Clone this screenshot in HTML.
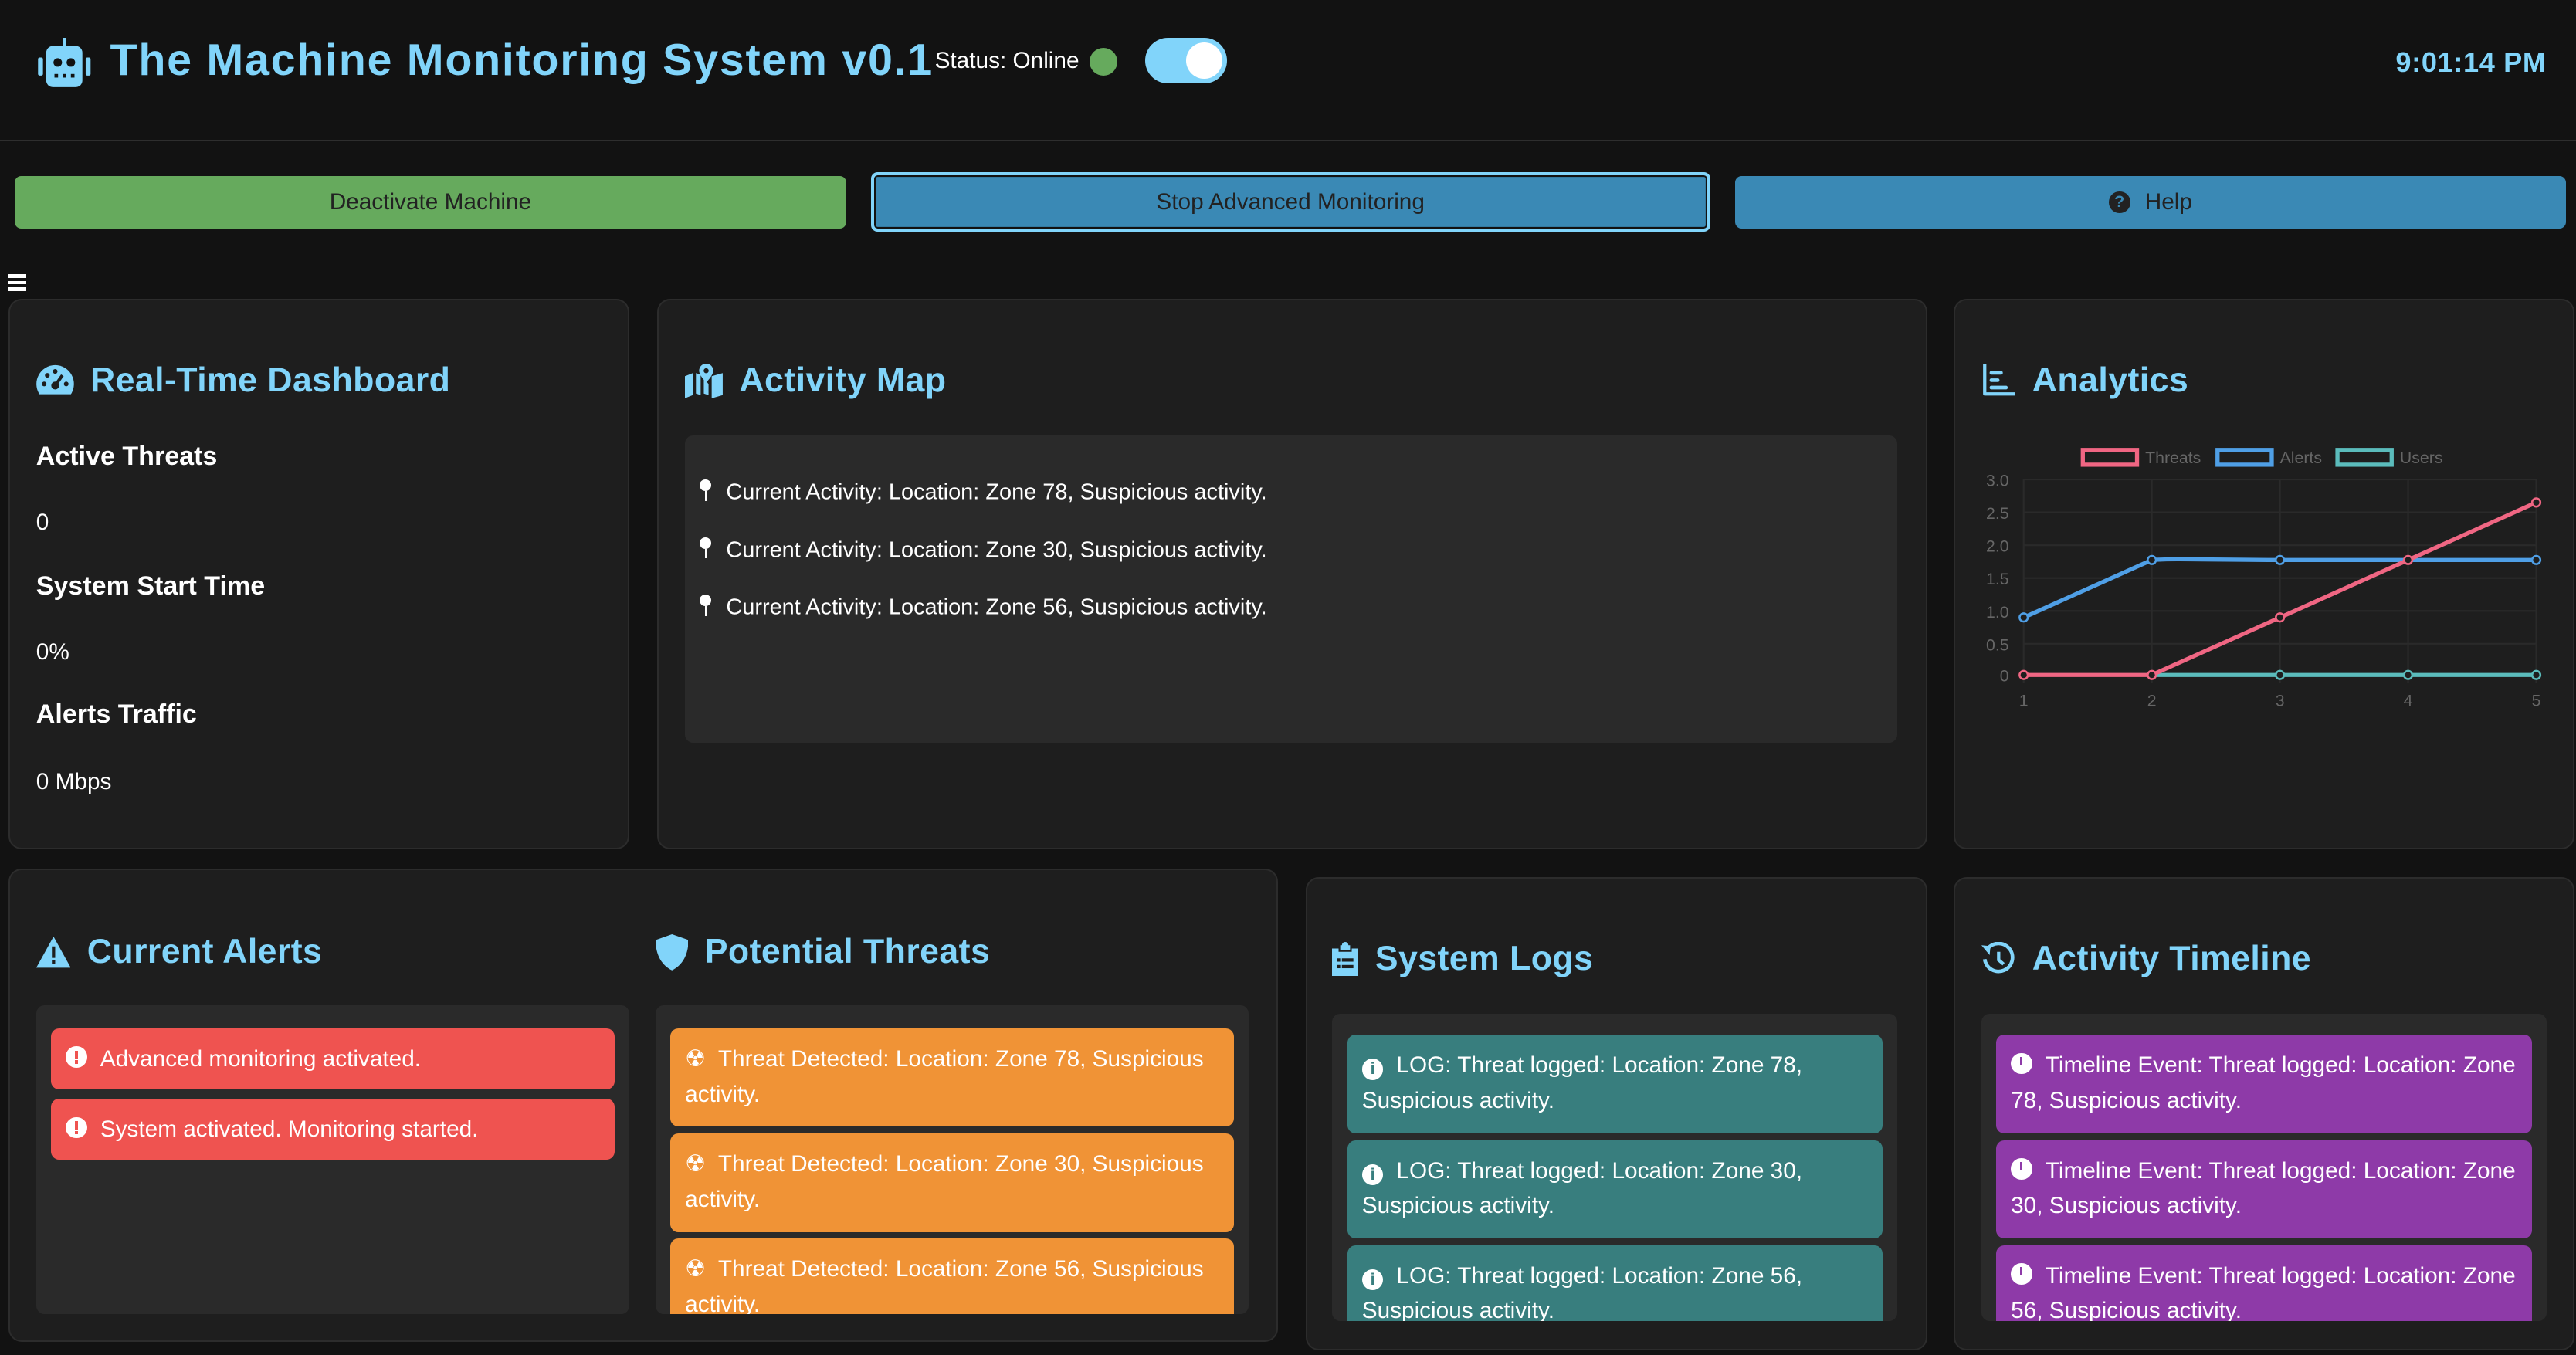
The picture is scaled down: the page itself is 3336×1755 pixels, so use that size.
<!DOCTYPE html>
<html><head><meta charset="utf-8"><style>
html,body{margin:0;padding:0;background:#121212;}
body{width:3336px;height:1754px;overflow:hidden;}
#w{position:absolute;left:0;top:0;width:1568px;height:825px;zoom:2.12755;font-family:"Liberation Sans",sans-serif;color:#fff;}
.a{position:absolute;}
.card{position:absolute;background:#1e1e1e;border:1px solid #2c2c2c;border-radius:8px;box-sizing:border-box;}
.h{position:absolute;font-weight:bold;font-size:21px;color:#81d4fa;display:flex;align-items:center;gap:10px;white-space:nowrap;letter-spacing:0.2px;}
.h svg{fill:#81d4fa;}
.inner{position:absolute;background:#2a2a2a;border-radius:5px;overflow:hidden;}
.it{position:absolute;left:9px;right:9px;border-radius:5px;font-size:14px;line-height:21.5px;padding:8px 8px 8px 9px;box-sizing:border-box;}
.btn{position:absolute;top:107px;height:32px;border-radius:4px;font-size:14px;color:#222;display:flex;align-items:center;justify-content:center;box-sizing:border-box;}
.lbl{position:absolute;font-size:14px;}
.b{font-weight:bold;font-size:16px;}
.ic{display:inline-block;width:13px;height:13px;border-radius:50%;background:#fff;vertical-align:-1px;margin-right:8px;position:relative;}
.m{font-size:13.6px;}
</style></head><body><div id="w">

<svg class="a" style="left:21px;top:23px" width="36" height="30" viewBox="0 0 36 30"><g fill="#81d4fa"><rect x="17" y="0" width="2" height="6"/><rect x="7" y="5" width="22" height="25" rx="4"/><rect x="2" y="12" width="3" height="11" rx="1"/><rect x="31" y="12" width="3" height="11" rx="1"/></g><g fill="#121212"><circle cx="14" cy="15" r="2.6"/><circle cx="22" cy="15" r="2.6"/><rect x="12" y="22" width="2.2" height="2.2"/><rect x="17" y="22" width="2.2" height="2.2"/><rect x="22" y="22" width="2.2" height="2.2"/></g></svg>
<div class="a" style="left:67px;top:21px;font-size:27px;font-weight:bold;color:#81d4fa;white-space:nowrap;letter-spacing:0.8px">The Machine Monitoring System v0.1</div>
<div class="a" style="left:569px;top:29px;font-size:14px;">Status: Online</div>
<div class="a" style="left:663px;top:29px;width:17px;height:17px;border-radius:50%;background:#66aa5d"></div>
<div class="a" style="left:697px;top:23px;width:50px;height:28px;border-radius:14px;background:#81d4fa"></div>
<div class="a" style="left:722px;top:26px;width:22px;height:22px;border-radius:50%;background:#fff"></div>
<div class="a" style="right:18px;top:28px;font-size:17px;font-weight:bold;color:#81d4fa;letter-spacing:0.3px">9:01:14 PM</div>
<div class="a" style="left:0;top:85px;width:1568px;height:1px;background:#2e2e2e"></div>

<div class="btn" style="left:9px;width:506px;background:#66aa5d">Deactivate Machine</div>
<div class="btn" style="left:530px;width:511px;height:36px;top:105px;background:#3a89b5;border:2px solid #81d4fa;box-shadow:inset 0 0 0 1px #121212">Stop Advanced Monitoring</div>
<div class="btn" style="left:1056px;width:506px;background:#3a89b5"><span style="display:inline-block;width:13px;height:13px;border-radius:50%;background:#222;color:#3a89b5;font-size:10px;line-height:13px;text-align:center;font-weight:bold;margin-right:9px">?</span>Help</div>
<div class="a" style="left:5px;top:167px;width:11px"><div style="height:2px;background:#fff;margin-bottom:2px"></div><div style="height:2px;background:#fff;margin-bottom:2px"></div><div style="height:2px;background:#fff"></div></div>

<div class="card" style="left:5px;top:182px;width:378px;height:335px"></div>
<div class="h" style="left:22px;top:220px"><svg width="23" height="20" viewBox="0 0 24 20"><path d="M12 0A12 12 0 0 0 2 18.5h20A12 12 0 0 0 12 0z"/><g fill="#1e1e1e"><circle cx="12" cy="13" r="2.5"/><rect x="11" y="5" width="2" height="7" transform="rotate(35 12 13)"/><circle cx="5" cy="12" r="1.5"/><circle cx="7" cy="6.5" r="1.5"/><circle cx="12" cy="4" r="1.5"/><circle cx="19" cy="12" r="1.5"/></g></svg>Real-Time Dashboard</div>
<div class="a b" style="left:22px;top:269px">Active Threats</div>
<div class="lbl" style="left:22px;top:310px">0</div>
<div class="a b" style="left:22px;top:348px">System Start Time</div>
<div class="lbl" style="left:22px;top:389px">0%</div>
<div class="a b" style="left:22px;top:426px">Alerts Traffic</div>
<div class="lbl" style="left:22px;top:468px">0 Mbps</div>

<div class="card" style="left:400px;top:182px;width:773px;height:335px"></div>
<div class="h" style="left:417px;top:220px"><svg width="23" height="22" viewBox="0 0 24 22"><path d="M0 8l5-2v14l-5 2zM7 6l3 1 0 13-3-1zM17 8l7-2v14l-7 2zM12 9l3 4v7l-3-1z"/><path d="M13.5 0a4.5 4.5 0 0 0-4.5 4.5c0 3 4.5 7.5 4.5 7.5s4.5-4.5 4.5-7.5A4.5 4.5 0 0 0 13.5 0z"/><circle cx="13.5" cy="4.5" r="1.6" fill="#1e1e1e"/></svg>Activity Map</div>
<div class="inner" style="left:417px;top:265px;width:738px;height:187px"></div>
<div class="lbl m" style="left:426px;top:291px;white-space:nowrap"><span style="display:inline-block;width:8px;margin-right:8px;position:relative;top:1px"><span style="display:block;width:7px;height:7px;border-radius:50%;background:#fff"></span><span style="display:block;width:1.5px;height:6px;background:#fff;margin-left:3px"></span></span>Current Activity: Location: Zone 78, Suspicious activity.</div>
<div class="lbl m" style="left:426px;top:326px;white-space:nowrap"><span style="display:inline-block;width:8px;margin-right:8px;position:relative;top:1px"><span style="display:block;width:7px;height:7px;border-radius:50%;background:#fff"></span><span style="display:block;width:1.5px;height:6px;background:#fff;margin-left:3px"></span></span>Current Activity: Location: Zone 30, Suspicious activity.</div>
<div class="lbl m" style="left:426px;top:361px;white-space:nowrap"><span style="display:inline-block;width:8px;margin-right:8px;position:relative;top:1px"><span style="display:block;width:7px;height:7px;border-radius:50%;background:#fff"></span><span style="display:block;width:1.5px;height:6px;background:#fff;margin-left:3px"></span></span>Current Activity: Location: Zone 56, Suspicious activity.</div>

<div class="card" style="left:1189px;top:182px;width:378px;height:335px"></div>
<div class="h" style="left:1206px;top:220px"><svg width="21" height="20" viewBox="0 0 21 20"><path d="M1 0h2v17h18v2H2a1 1 0 0 1-1-1z"/><rect x="5" y="4" width="8" height="2.2" rx="1"/><rect x="5" y="8.5" width="6" height="2.2" rx="1"/><rect x="5" y="13" width="11" height="2.2" rx="1"/></svg>Analytics</div>
<svg class="a" style="left:1195px;top:268px" width="365" height="170" viewBox="0 0 365 170" font-family="Liberation Sans" font-size="10" fill="#666">
<g stroke="#2a2a2a" stroke-width="1"><line x1="37" y1="24" x2="349" y2="24"/><line x1="37" y1="44" x2="349" y2="44"/><line x1="37" y1="64" x2="349" y2="64"/><line x1="37" y1="84" x2="349" y2="84"/><line x1="37" y1="104" x2="349" y2="104"/><line x1="37" y1="124" x2="349" y2="124"/><line x1="37" y1="143" x2="349" y2="143"/><line x1="37" y1="24" x2="37" y2="148"/><line x1="115" y1="24" x2="115" y2="148"/><line x1="193" y1="24" x2="193" y2="148"/><line x1="271" y1="24" x2="271" y2="148"/><line x1="349" y1="24" x2="349" y2="148"/></g>
<rect x="73" y="6" width="33" height="9" fill="none" stroke="#f06683" stroke-width="2.5"/><text x="111" y="14">Threats</text>
<rect x="155" y="6" width="33" height="9" fill="none" stroke="#4f9fe6" stroke-width="2.5"/><text x="193" y="14">Alerts</text>
<rect x="228" y="6" width="33" height="9" fill="none" stroke="#5bbcbc" stroke-width="2.5"/><text x="266" y="14">Users</text>
<g text-anchor="end"><text x="28" y="28">3.0</text><text x="28" y="48">2.5</text><text x="28" y="68">2.0</text><text x="28" y="88">1.5</text><text x="28" y="108">1.0</text><text x="28" y="128">0.5</text><text x="28" y="147">0</text></g>
<g text-anchor="middle"><text x="37" y="162">1</text><text x="115" y="162">2</text><text x="193" y="162">3</text><text x="271" y="162">4</text><text x="349" y="162">5</text></g>
<g fill="none" stroke-width="2.5"><polyline points="115,143 193,143 271,143 349,143" stroke="#5bbcbc"/><path d="M37 108L115 73C130 72 150 73 193 73L349 73" stroke="#4f9fe6"/><polyline points="37,143 115,143 193,108 271,73 349,38" stroke="#f06683"/></g>
<g fill="#1e1e1e" stroke-width="1.2"><circle cx="193" cy="143" r="2.5" stroke="#5bbcbc"/><circle cx="271" cy="143" r="2.5" stroke="#5bbcbc"/><circle cx="349" cy="143" r="2.5" stroke="#5bbcbc"/><circle cx="37" cy="108" r="2.5" stroke="#4f9fe6"/><circle cx="115" cy="73" r="2.5" stroke="#4f9fe6"/><circle cx="193" cy="73" r="2.5" stroke="#4f9fe6"/><circle cx="349" cy="73" r="2.5" stroke="#4f9fe6"/><circle cx="37" cy="143" r="2.5" stroke="#f06683"/><circle cx="115" cy="143" r="2.5" stroke="#f06683"/><circle cx="193" cy="108" r="2.5" stroke="#f06683"/><circle cx="271" cy="73" r="2.5" stroke="#f06683"/><circle cx="349" cy="38" r="2.5" stroke="#f06683"/></g>
</svg>

<div class="card" style="left:5px;top:529px;width:773px;height:288px"></div>
<div class="h" style="left:22px;top:568px"><svg width="21" height="19" viewBox="0 0 21 19"><path d="M10.5 0L21 19H0z"/><rect x="9.5" y="6" width="2" height="7" fill="#1e1e1e"/><rect x="9.5" y="14.5" width="2" height="2" fill="#1e1e1e"/></svg>Current Alerts</div>
<div class="inner" style="left:22px;top:612px;width:361px;height:188px">
<div class="it" style="top:14px;height:37px;background:#ef5350"><span class="ic"><b style="position:absolute;left:5.5px;top:2.5px;width:2px;height:5px;background:#ef5350"></b><b style="position:absolute;left:5.5px;top:8.5px;width:2px;height:2px;background:#ef5350"></b></span>Advanced monitoring activated.</div>
<div class="it" style="top:57px;height:37px;background:#ef5350"><span class="ic"><b style="position:absolute;left:5.5px;top:2.5px;width:2px;height:5px;background:#ef5350"></b><b style="position:absolute;left:5.5px;top:8.5px;width:2px;height:2px;background:#ef5350"></b></span>System activated. Monitoring started.</div>
</div>
<div class="h" style="left:399px;top:568px"><svg width="20" height="22" viewBox="0 0 20 22"><path d="M10 0L20 3.5C20 13 16 19 10 22 4 19 0 13 0 3.5z"/></svg>Potential Threats</div>
<div class="inner" style="left:399px;top:612px;width:361px;height:188px">
<div class="it" style="top:14px;height:60px;background:#f09336">☢&nbsp; Threat Detected: Location: Zone 78, Suspicious activity.</div>
<div class="it" style="top:78px;height:60px;background:#f09336">☢&nbsp; Threat Detected: Location: Zone 30, Suspicious activity.</div>
<div class="it" style="top:142px;height:60px;background:#f09336">☢&nbsp; Threat Detected: Location: Zone 56, Suspicious activity.</div>
</div>

<div class="card" style="left:795px;top:534px;width:378px;height:288px"></div>
<div class="h" style="left:811px;top:572px"><svg width="16" height="21" viewBox="0 0 16 21"><path d="M5 2h6v3H5z M0 4h4v2h8V4h4v17H0z"/><circle cx="8" cy="2" r="2"/><g fill="#1e1e1e"><rect x="3" y="10" width="2" height="2"/><rect x="6" y="10" width="7" height="2"/><rect x="3" y="14" width="2" height="2"/><rect x="6" y="14" width="7" height="2"/></g></svg>System Logs</div>
<div class="inner" style="left:811px;top:617px;width:344px;height:187px">
<div class="it" style="top:13px;height:60px;background:#387e7e"><span class="ic" style="color:#387e7e;font-size:10px;text-align:center;line-height:13px;font-weight:bold">i</span>LOG: Threat logged: Location: Zone 78, Suspicious activity.</div>
<div class="it" style="top:77px;height:60px;background:#387e7e"><span class="ic" style="color:#387e7e;font-size:10px;text-align:center;line-height:13px;font-weight:bold">i</span>LOG: Threat logged: Location: Zone 30, Suspicious activity.</div>
<div class="it" style="top:141px;height:60px;background:#387e7e"><span class="ic" style="color:#387e7e;font-size:10px;text-align:center;line-height:13px;font-weight:bold">i</span>LOG: Threat logged: Location: Zone 56, Suspicious activity.</div>
</div>

<div class="card" style="left:1189px;top:534px;width:378px;height:288px"></div>
<div class="h" style="left:1206px;top:572px"><svg width="21" height="21" viewBox="0 0 21 21"><path d="M3.5 4.5A8.5 8.5 0 1 1 2 10.5" fill="none" stroke="#81d4fa" stroke-width="2.2"/><path d="M0 2l5.5 0.5-0.5 5.5z"/><path d="M10.5 6v5l3 2.5" fill="none" stroke="#81d4fa" stroke-width="2"/></svg>Activity Timeline</div>
<div class="inner" style="left:1206px;top:617px;width:344px;height:187px">
<div class="it" style="top:13px;height:60px;background:#8e3aa8"><span class="ic"><b style="position:absolute;left:5.5px;top:2.5px;width:1.5px;height:5px;background:#8e3aa8"></b></span>Timeline Event: Threat logged: Location: Zone 78, Suspicious activity.</div>
<div class="it" style="top:77px;height:60px;background:#8e3aa8"><span class="ic"><b style="position:absolute;left:5.5px;top:2.5px;width:1.5px;height:5px;background:#8e3aa8"></b></span>Timeline Event: Threat logged: Location: Zone 30, Suspicious activity.</div>
<div class="it" style="top:141px;height:60px;background:#8e3aa8"><span class="ic"><b style="position:absolute;left:5.5px;top:2.5px;width:1.5px;height:5px;background:#8e3aa8"></b></span>Timeline Event: Threat logged: Location: Zone 56, Suspicious activity.</div>
</div>

</div></body></html>
